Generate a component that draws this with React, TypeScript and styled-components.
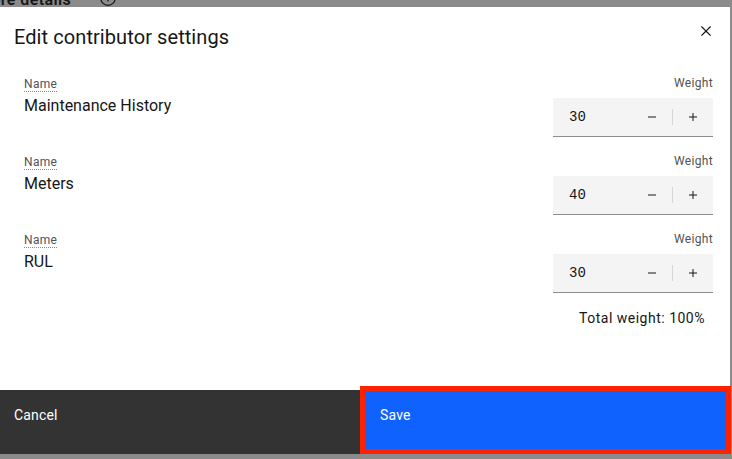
import React from 'react';
import styled, { createGlobalStyle } from 'styled-components';

const GlobalStyle = createGlobalStyle`
  html, body { margin: 0; padding: 0; }
  body {
    background: #8b8b8b;
    font-family: Roboto, "Noto Sans", sans-serif;
    color: #161616;
  }
  * { box-sizing: border-box; }
`;

const Screen = styled.div`
  width: 732px;
  height: 459px;
  background: #8b8b8b;
  display: flex;
  flex-direction: column;
  overflow: hidden;
`;

const PageStrip = styled.div`
  flex: none;
  height: 7px;
  overflow: hidden;
  display: flex;
  align-items: flex-start;
`;

const PageHeading = styled.span`
  flex: 0 0 123px;
  margin-left: -23px;
  margin-top: -10px;
  font-size: 16px;
  line-height: 20px;
  font-weight: 600;
  letter-spacing: 0.4px;
  color: #161616;
  white-space: nowrap;
`;

const InfoGlyph = styled.svg`
  flex: none;
  margin-top: -10px;
  width: 16px;
  height: 16px;
  color: #161616;
`;

const Modal = styled.div`
  flex: none;
  width: 730px;
  height: 447px;
  background: #ffffff;
  display: flex;
  flex-direction: column;
`;

const Header = styled.div`
  flex: none;
  display: flex;
  justify-content: space-between;
  align-items: flex-start;
  height: 48px;
`;

const Title = styled.h2`
  margin: 0;
  padding: 16px 0 0 14px;
  font-size: 20px;
  line-height: 28px;
  font-weight: 400;
  letter-spacing: 0.08px;
  color: #161616;
`;

const CloseButton = styled.button`
  width: 48px;
  height: 48px;
  border: 0;
  padding: 0;
  background: transparent;
  display: flex;
  align-items: center;
  justify-content: center;
  color: #161616;
`;

const Body = styled.div`
  flex: 1;
  padding: 20px 17px 0 24px;
  display: flex;
  flex-direction: column;
`;

const RowList = styled.div`
  display: flex;
  flex-direction: column;
  gap: 16px;
`;

const Row = styled.div`
  display: flex;
  justify-content: space-between;
  align-items: flex-start;
`;

const NameCol = styled.div`
  display: flex;
  flex-direction: column;
`;

const LabelLine = styled.div`
  height: 18px;
  padding-top: 2px;
  line-height: 16px;
`;

const FieldLabel = styled.span`
  display: inline-block;
  vertical-align: top;
  font-size: 12px;
  line-height: 14px;
  letter-spacing: 0.32px;
  color: #525252;
  border-bottom: 1px dotted #8d8d8d;
`;

const Value = styled.div`
  margin-top: 2px;
  font-size: 16px;
  line-height: 22px;
  color: #161616;
`;

const WeightCol = styled.div`
  width: 160px;
  display: flex;
  flex-direction: column;
`;

const WeightLabel = styled.div`
  font-size: 12px;
  line-height: 16px;
  letter-spacing: 0.32px;
  color: #525252;
  text-align: right;
  margin-bottom: 7px;
`;

const Stepper = styled.div`
  display: flex;
  align-items: center;
  height: 39px;
  background: #f4f4f4;
  border-bottom: 1px solid #8d8d8d;
`;

const StepValue = styled.span`
  flex: 1;
  padding-left: 16px;
  font-family: "Liberation Mono", "DejaVu Sans Mono", monospace;
  font-size: 14px;
  color: #161616;
`;

const StepButton = styled.button`
  width: 40px;
  height: 100%;
  border: 0;
  padding: 0;
  background: transparent;
  display: flex;
  align-items: center;
  justify-content: center;
  color: #161616;
`;

const StepDivider = styled.span`
  width: 1px;
  height: 16px;
  background: #d6d6d6;
`;

const Total = styled.div`
  align-self: flex-end;
  margin-top: 16px;
  padding-right: 8px;
  font-size: 14px;
  line-height: 18px;
  letter-spacing: 0.5px;
  color: #161616;
`;

const Footer = styled.div`
  flex: none;
  height: 64px;
  display: flex;
`;

const FooterButton = styled.button<{ $kind: 'secondary' | 'primary'; $highlight?: boolean }>`
  position: relative;
  flex: 1;
  border: 0;
  margin: 0;
  display: flex;
  align-items: flex-start;
  padding: 16px 14px 14px ${(p) => (p.$kind === 'primary' ? '16px' : '14px')};
  font-family: Roboto, "Noto Sans", sans-serif;
  font-size: 14px;
  line-height: 18px;
  letter-spacing: 0.16px;
  text-align: left;
  color: #ffffff;
  background: ${(p) => (p.$kind === 'primary' ? '#0f62fe' : '#333333')};

  ${(p) =>
    p.$highlight
      ? `
    &::after {
      content: '';
      position: absolute;
      top: -4px;
      left: -4px;
      right: -1px;
      bottom: 0;
      border: 5px solid #ff2200;
      pointer-events: none;
    }
  `
      : ''}
`;

const rows = [
  { name: 'Maintenance History', weight: 30 },
  { name: 'Meters', weight: 40 },
  { name: 'RUL', weight: 30 },
];

const MinusIcon = () => (
  <svg width="16" height="16" viewBox="0 0 32 32" fill="currentColor">
    <path d="M8 15h16v2H8z" />
  </svg>
);

const PlusIcon = () => (
  <svg width="16" height="16" viewBox="0 0 32 32" fill="currentColor">
    <path d="M17 15L17 8 15 8 15 15 8 15 8 17 15 17 15 24 17 24 17 17 24 17 24 15z" />
  </svg>
);

const CloseIcon = () => (
  <svg width="20" height="20" viewBox="0 0 32 32" fill="currentColor">
    <path d="M24 9.4L22.6 8 16 14.6 9.4 8 8 9.4 14.6 16 8 22.6 9.4 24 16 17.4 22.6 24 24 22.6 17.4 16 24 9.4z" />
  </svg>
);

export default function App() {
  return (
    <>
      <GlobalStyle />
      <Screen>
        <PageStrip>
          <PageHeading>More details</PageHeading>
          <InfoGlyph viewBox="0 0 16 16" fill="none">
            <circle cx="8" cy="8" r="7.3" stroke="currentColor" strokeWidth="1.2" />
            <rect x="7.4" y="6.5" width="1.2" height="5" fill="currentColor" />
            <circle cx="8" cy="4.6" r="0.8" fill="currentColor" />
          </InfoGlyph>
        </PageStrip>
        <Modal role="dialog" aria-label="Edit contributor settings">
          <Header>
            <Title>Edit contributor settings</Title>
            <CloseButton aria-label="Close">
              <CloseIcon />
            </CloseButton>
          </Header>
          <Body>
            <RowList>
              {rows.map((r) => (
                <Row key={r.name}>
                  <NameCol>
                    <LabelLine>
                      <FieldLabel>Name</FieldLabel>
                    </LabelLine>
                    <Value>{r.name}</Value>
                  </NameCol>
                  <WeightCol>
                    <WeightLabel>Weight</WeightLabel>
                    <Stepper>
                      <StepValue>{r.weight}</StepValue>
                      <StepButton aria-label="Decrement">
                        <MinusIcon />
                      </StepButton>
                      <StepDivider />
                      <StepButton aria-label="Increment">
                        <PlusIcon />
                      </StepButton>
                    </Stepper>
                  </WeightCol>
                </Row>
              ))}
            </RowList>
            <Total>Total weight: 100%</Total>
          </Body>
          <Footer>
            <FooterButton $kind="secondary">Cancel</FooterButton>
            <FooterButton $kind="primary" $highlight>
              Save
            </FooterButton>
          </Footer>
        </Modal>
      </Screen>
    </>
  );
}
